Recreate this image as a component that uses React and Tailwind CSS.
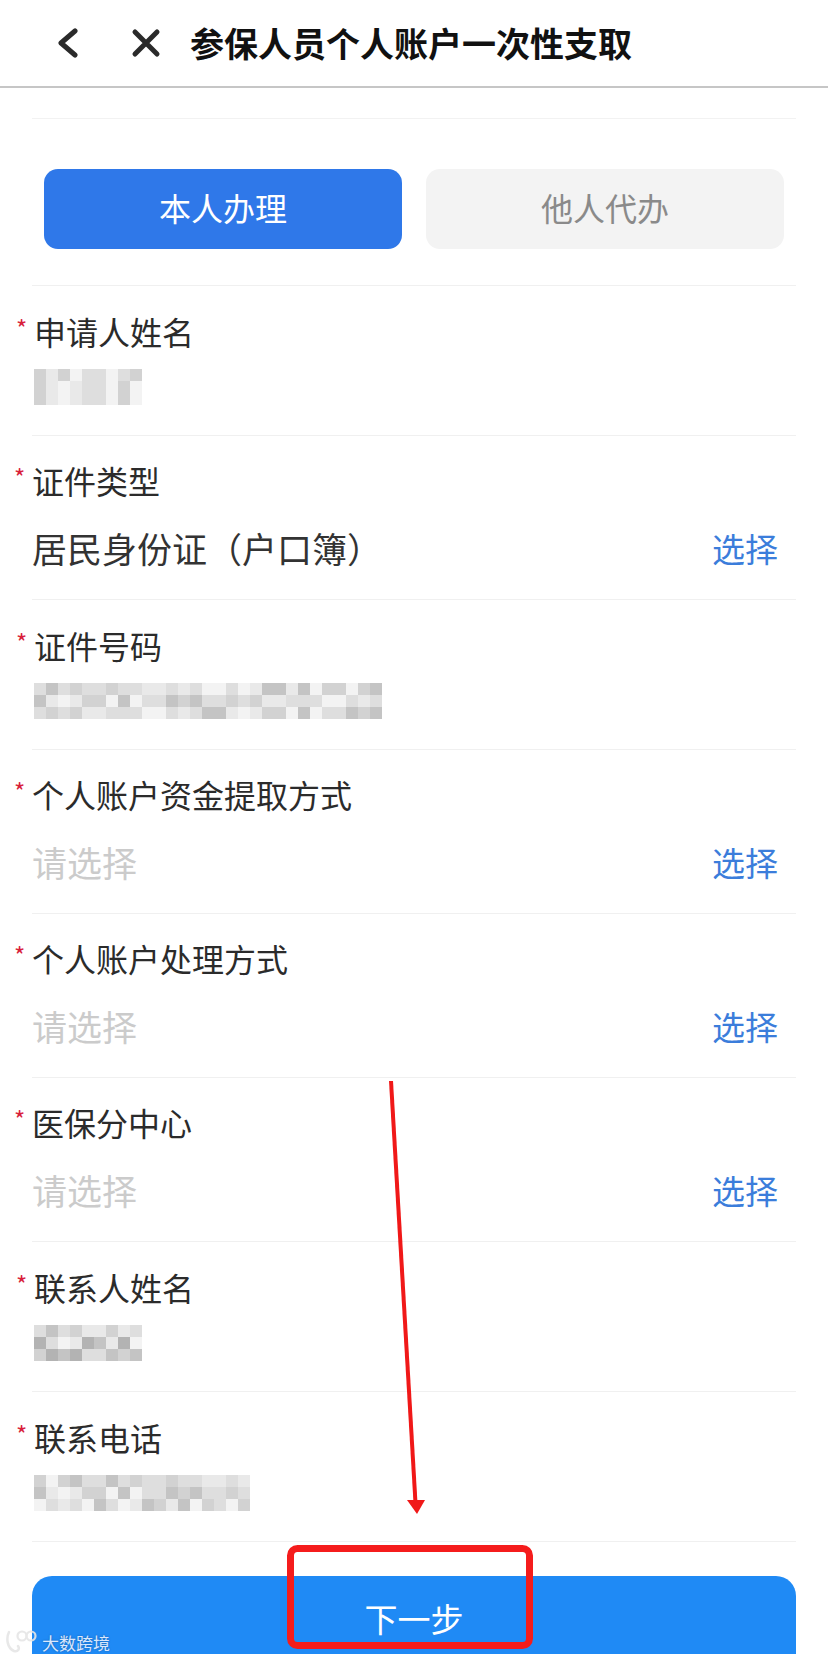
import React from "react";

const SHADES = [
  "bg-[#f3f3f3]",
  "bg-[#e9e9e9]",
  "bg-[#dedede]",
  "bg-[#d2d2d2]",
  "bg-[#c4c4c4]",
  "bg-[#b3b3b3]",
];

function Mosaic({ cols, rows = 3, seed = 0, dark = 0 }) {
  const cells = [];
  for (let r = 0; r < rows; r++) {
    for (let c = 0; c < cols; c++) {
      let v = (c * 7 + r * 11 + seed * 5 + ((c * c + r * seed) % 5)) % 6;
      v = Math.min(5, Math.max(0, Math.round(v * (0.5 + dark * 0.15))));
      cells.push(<div key={r + "-" + c} className={"w-[12px] h-[12px] " + SHADES[v]} />);
    }
  }
  return (
    <div className="grid w-fit" style={{ gridTemplateColumns: `repeat(${cols}, 12px)` }}>
      {cells}
    </div>
  );
}

function Label({ children }) {
  return (
    <div className="flex items-start -ml-[18px]">
      <span className="w-[18px] text-[#d8203a] text-[24px] leading-[30px]">*</span>
      <span className="text-[32px] leading-[36px] text-[#2b2b2b]">{children}</span>
    </div>
  );
}

function TextRow({ label, cols, seed, dark }) {
  return (
    <div className="h-[150px] border-b border-[#f0f0f0] pt-[27px] pl-[2px]">
      <Label>{label}</Label>
      <div className="mt-[20px]">
        <Mosaic cols={cols} seed={seed} dark={dark} />
      </div>
    </div>
  );
}

function SelectRow({ label, value }) {
  return (
    <div className="h-[164px] border-b border-[#f0f0f0] pt-[26px]">
      <Label>{label}</Label>
      <div className="mt-[26px] flex items-center justify-between pr-[18px]">
        <span
          className={
            "text-[35px] leading-[48px] " + (value ? "text-[#333333]" : "text-[#cbcbcb]")
          }
        >
          {value || "请选择"}
        </span>
        <span className="text-[33px] leading-[48px] text-[#3b7ddb]">选择</span>
      </div>
    </div>
  );
}

export default function App() {
  return (
    <div
      className="relative w-[828px] h-[1654px] overflow-hidden bg-white"
      style={{ fontFamily: '"Noto Sans CJK SC", "Noto Sans", sans-serif' }}
    >
      {/* Header */}
      <div className="h-[88px] border-b-2 border-[#c6c6c6] flex items-center pl-[56px]">
        <svg width="22" height="32" viewBox="0 0 22 32" className="shrink-0">
          <path
            d="M19 4 L5 16 L19 28"
            fill="none"
            stroke="#2a2a2a"
            strokeWidth="5"
            strokeLinecap="round"
            strokeLinejoin="round"
          />
        </svg>
        <svg width="30" height="30" viewBox="0 0 30 30" className="ml-[53px] shrink-0">
          <path
            d="M4 4 L26 26 M26 4 L4 26"
            fill="none"
            stroke="#2a2a2a"
            strokeWidth="5"
            strokeLinecap="round"
          />
        </svg>
        <div className="ml-[29px] text-[34px] font-bold text-[#111111] leading-none">
          参保人员个人账户一次性支取
        </div>
      </div>

      <div className="mx-[32px]">
        <div className="h-[31px] border-b border-[#f2f2f2]" />

        {/* Toggle buttons */}
        <div className="pt-[50px] pb-[36px] px-[12px] border-b border-[#f0f0f0] grid grid-cols-2 gap-[24px]">
          <div className="h-[80px] rounded-[14px] bg-[#2f78e9] flex items-center justify-center text-white text-[32px] pb-[4px]">
            本人办理
          </div>
          <div className="h-[80px] rounded-[14px] bg-[#f3f3f3] flex items-center justify-center text-[#8a8a8a] text-[32px] pb-[4px]">
            他人代办
          </div>
        </div>

        <TextRow label="申请人姓名" cols={9} seed={1} dark={0} />
        <SelectRow label="证件类型" value="居民身份证（户口簿）" />
        <TextRow label="证件号码" cols={29} seed={3} dark={2} />
        <SelectRow label="个人账户资金提取方式" />
        <SelectRow label="个人账户处理方式" />
        <SelectRow label="医保分中心" />
        <TextRow label="联系人姓名" cols={9} seed={4} dark={3} />
        <TextRow label="联系电话" cols={18} seed={2} dark={2} />

        <div className="mt-[34px] h-[110px] rounded-[20px] bg-[#1f8af5] pt-[20px] text-center text-white text-[33px] leading-[44px]">
          下一步
        </div>
      </div>

      {/* Watermark */}
      <div className="absolute left-[4px] top-[1629px] flex items-end gap-[4px] opacity-90">
        <svg width="34" height="24" viewBox="0 0 34 24">
          <path
            d="M5 3 C2 9 3 19 10 22 C14 23 16 20 14 17"
            fill="none"
            stroke="#e6e6e6"
            strokeWidth="2.5"
            strokeLinecap="round"
          />
          <circle cx="18" cy="7" r="4.5" fill="none" stroke="#e6e6e6" strokeWidth="2.2" />
          <circle cx="27" cy="7" r="4.5" fill="none" stroke="#e6e6e6" strokeWidth="2.2" />
        </svg>
        <span className="text-[17px] leading-none text-[#eef3ff] [text-shadow:0_0_2px_rgba(0,0,0,0.35)] pb-[2px]">
          大数跨境
        </span>
      </div>

      {/* Red annotation */}
      <svg
        className="absolute left-0 top-0 pointer-events-none"
        width="828"
        height="1654"
        viewBox="0 0 828 1654"
      >
        <line x1="391" y1="1081" x2="415.5" y2="1503" stroke="#f01818" strokeWidth="4" />
        <polygon points="407,1500 425,1500 417,1514" fill="#f01818" />
        <rect
          x="290.5"
          y="1548.5"
          width="239"
          height="97"
          rx="7"
          fill="none"
          stroke="#f51c1c"
          strokeWidth="7"
        />
      </svg>
    </div>
  );
}
